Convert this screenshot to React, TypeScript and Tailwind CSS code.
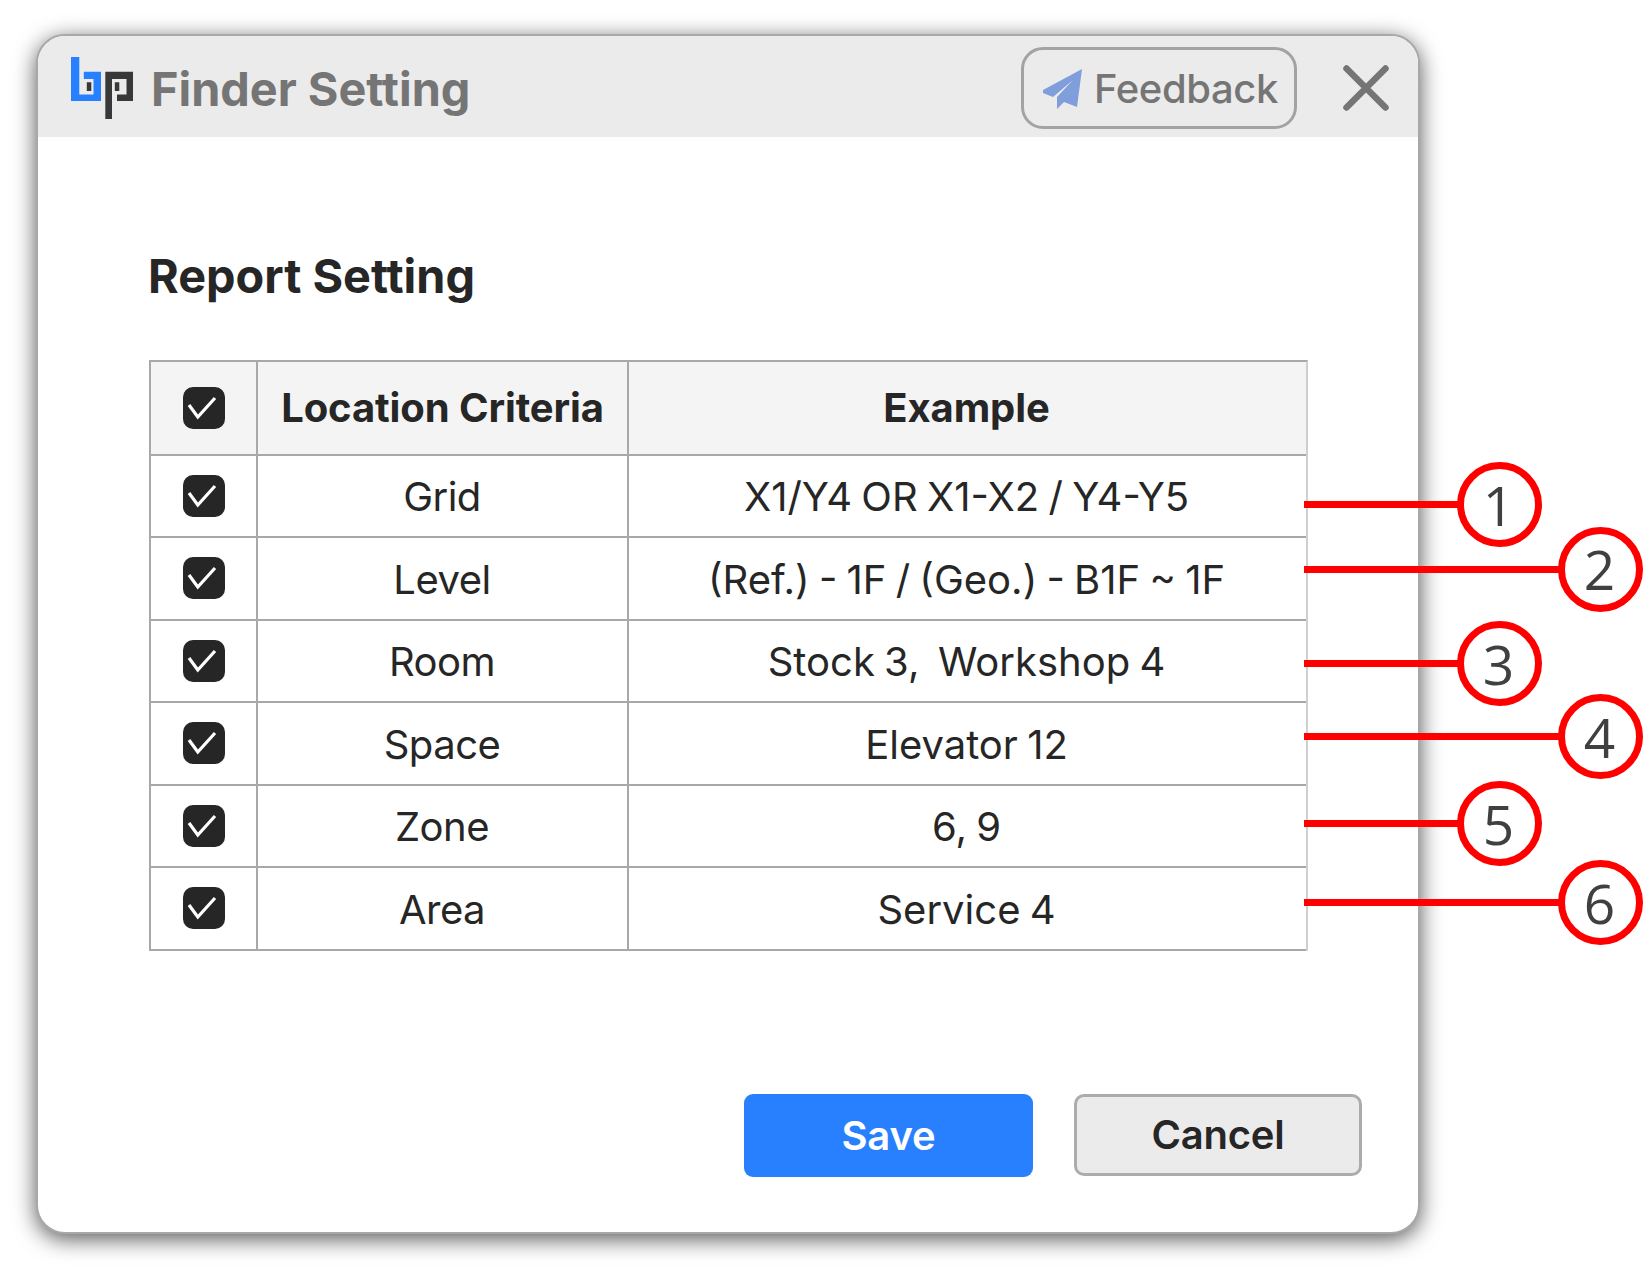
const rows = [
  ["Grid", "X1/Y4 OR X1-X2 / Y4-Y5"],
  ["Level", "(Ref.) - 1F / (Geo.) - B1F ~ 1F"],
  ["Room", "Stock 3,\u00a0 Workshop 4"],
  ["Space", "Elevator 12"],
  ["Zone", "6, 9"],
  ["Area", "Service 4"],
];

const callouts = [
  { n: 1, top: 462, line: "w-[154px]" },
  { n: 2, top: 526.5, line: "w-[255px]" },
  { n: 3, top: 621, line: "w-[154px]" },
  { n: 4, top: 694, line: "w-[255px]" },
  { n: 5, top: 781, line: "w-[154px]" },
  { n: 6, top: 860, line: "w-[255px]" },
];

function Logo() {
  return (
    <svg className="mt-[3px] h-[62px] w-[62px] shrink-0" viewBox="0 0 62 62">
      <path d="M0 0H8.3V37.5H22.5V22H12.8V14.8H30V44H0Z" fill="#2680ff" />
      <path d="M34.3 14.8H62V44H46V37.5H55.5V22H41V62H34.3Z" fill="#383838" />
      <path d="M15.8 25.3H20.3V34H15.8ZM43.8 25.3H48.3V34H43.8Z" fill="#383838" />
    </svg>
  );
}

function Check() {
  return (
    <span className="ml-px flex size-[42px] items-center justify-center rounded-[10px] bg-[#262626]">
      <svg className="size-[42px]" viewBox="0 0 42 42" fill="none" stroke="#fff" strokeWidth="3.2">
        <path d="M6 18L14.8 30L32 11" />
      </svg>
    </span>
  );
}

function Row({ cells, header }: { cells: string[]; header?: boolean }) {
  return (
    <div
      className={
        header
          ? "grid h-[93.5px] grid-cols-[107px_371px_1fr] border-b-2 border-[#a8a8a8] bg-[#f4f4f4] pt-px text-[40px] font-[650] tracking-[-0.1px]"
          : "grid h-[82.5px] grid-cols-[107px_371px_1fr] border-b-2 border-[#a8a8a8] text-[40px]"
      }
    >
      <div className={header ? "-mt-px flex items-center justify-center border-r-2 border-[#a8a8a8] pt-px" : "flex items-center justify-center border-r-2 border-[#a8a8a8]"}>
        <Check />
      </div>
      <div
        className={
          header
            ? "-mt-px flex items-center justify-center whitespace-nowrap border-r-2 border-[#a8a8a8] pt-px"
            : "flex items-center justify-center whitespace-nowrap border-r-2 border-[#a8a8a8] pt-[3px] pr-px tracking-[-0.5px]"
        }
      >
        {cells[0]}
      </div>
      <div
        className={
          header
            ? "flex items-center justify-center whitespace-nowrap pr-[2px]"
            : "flex items-center justify-center whitespace-nowrap pt-[3px] pr-[2px] [word-spacing:-2px]"
        }
      >
        {cells[1]}
      </div>
    </div>
  );
}

export default function App() {
  return (
    <div className="relative h-[1267px] w-[1643px] overflow-hidden bg-white pl-9 pt-[34px] font-['Inter',sans-serif] text-[#262626]">
      <main className="flex h-[1200px] w-[1384px] flex-col overflow-hidden rounded-[29px] border-[2.5px] border-[#a8a8a8] bg-white shadow-[0_5px_22px_0_rgba(0,0,0,0.66)]">
        <header className="flex h-[101px] shrink-0 items-center bg-[#ebebeb] pl-[33px] pr-[28px]">
          <Logo />
          <h1 className="ml-[18px] mt-[5px] text-[46.8px] font-bold text-[#757575]">Finder Setting</h1>
          <button className="ml-auto mt-[2px] flex h-[82px] w-[276px] items-center justify-center rounded-[22px] border-[3px] border-[#a3a3a3] pl-[3px] pt-[2px] text-[40px] font-medium tracking-[-0.4px] text-[#757575]">
            <svg className="mr-[11px] h-10 w-10" viewBox="0 0 40 40" fill="#7f9edb">
              <path d="M39 0L34 38L21 33L14 40V28L30 11L10 28L0 24V21Z" />
            </svg>
            Feedback
          </button>
          <svg className="ml-[45px] mt-[3px] size-[48px]" viewBox="0 0 48 48" fill="none" stroke="#757575" strokeWidth="6.5" strokeLinecap="round">
            <path d="M4.5 4.5L43.5 43.5M43.5 4.5L4.5 43.5" />
          </svg>
        </header>
        <section className="px-[111px] pt-[110px]">
          <h2 className="-ml-px text-[46.8px] leading-[58px] font-bold">Report Setting</h2>
          <div className="mt-[55px] w-[1159px] border-2 border-b-0 border-[#a8a8a8] border-r-[#cfcfcf]">
            <Row header cells={["Location Criteria", "Example"]} />
            {rows.map((r) => (
              <Row key={r[0]} cells={r} />
            ))}
          </div>
        </section>
        <footer className="mb-[55px] mt-auto flex justify-end gap-[41px] pr-[56px] text-[40px] font-semibold tracking-[-0.2px]">
          <button className="h-[83px] w-[289px] rounded-[9px] bg-[#2880ff] text-white">Save</button>
          <button className="h-[82px] w-[288px] rounded-[10px] border-[3px] border-[#acacac] bg-[#ebebeb]">Cancel</button>
        </footer>
      </main>
      {callouts.map((c) => (
        <div key={c.n} className="absolute left-[1304px] flex items-center" style={{ top: c.top }}>
          <span className={`h-[7px] bg-[#ff0000] ${c.line}`} />
          <span className="-ml-px flex size-[85px] items-center justify-center rounded-full border-[7px] border-[#ff0000] bg-white pb-px pr-[2px] font-['Open_Sans',sans-serif] text-[55px] leading-none font-normal text-[#404040]">
            {c.n}
          </span>
        </div>
      ))}
    </div>
  );
}
